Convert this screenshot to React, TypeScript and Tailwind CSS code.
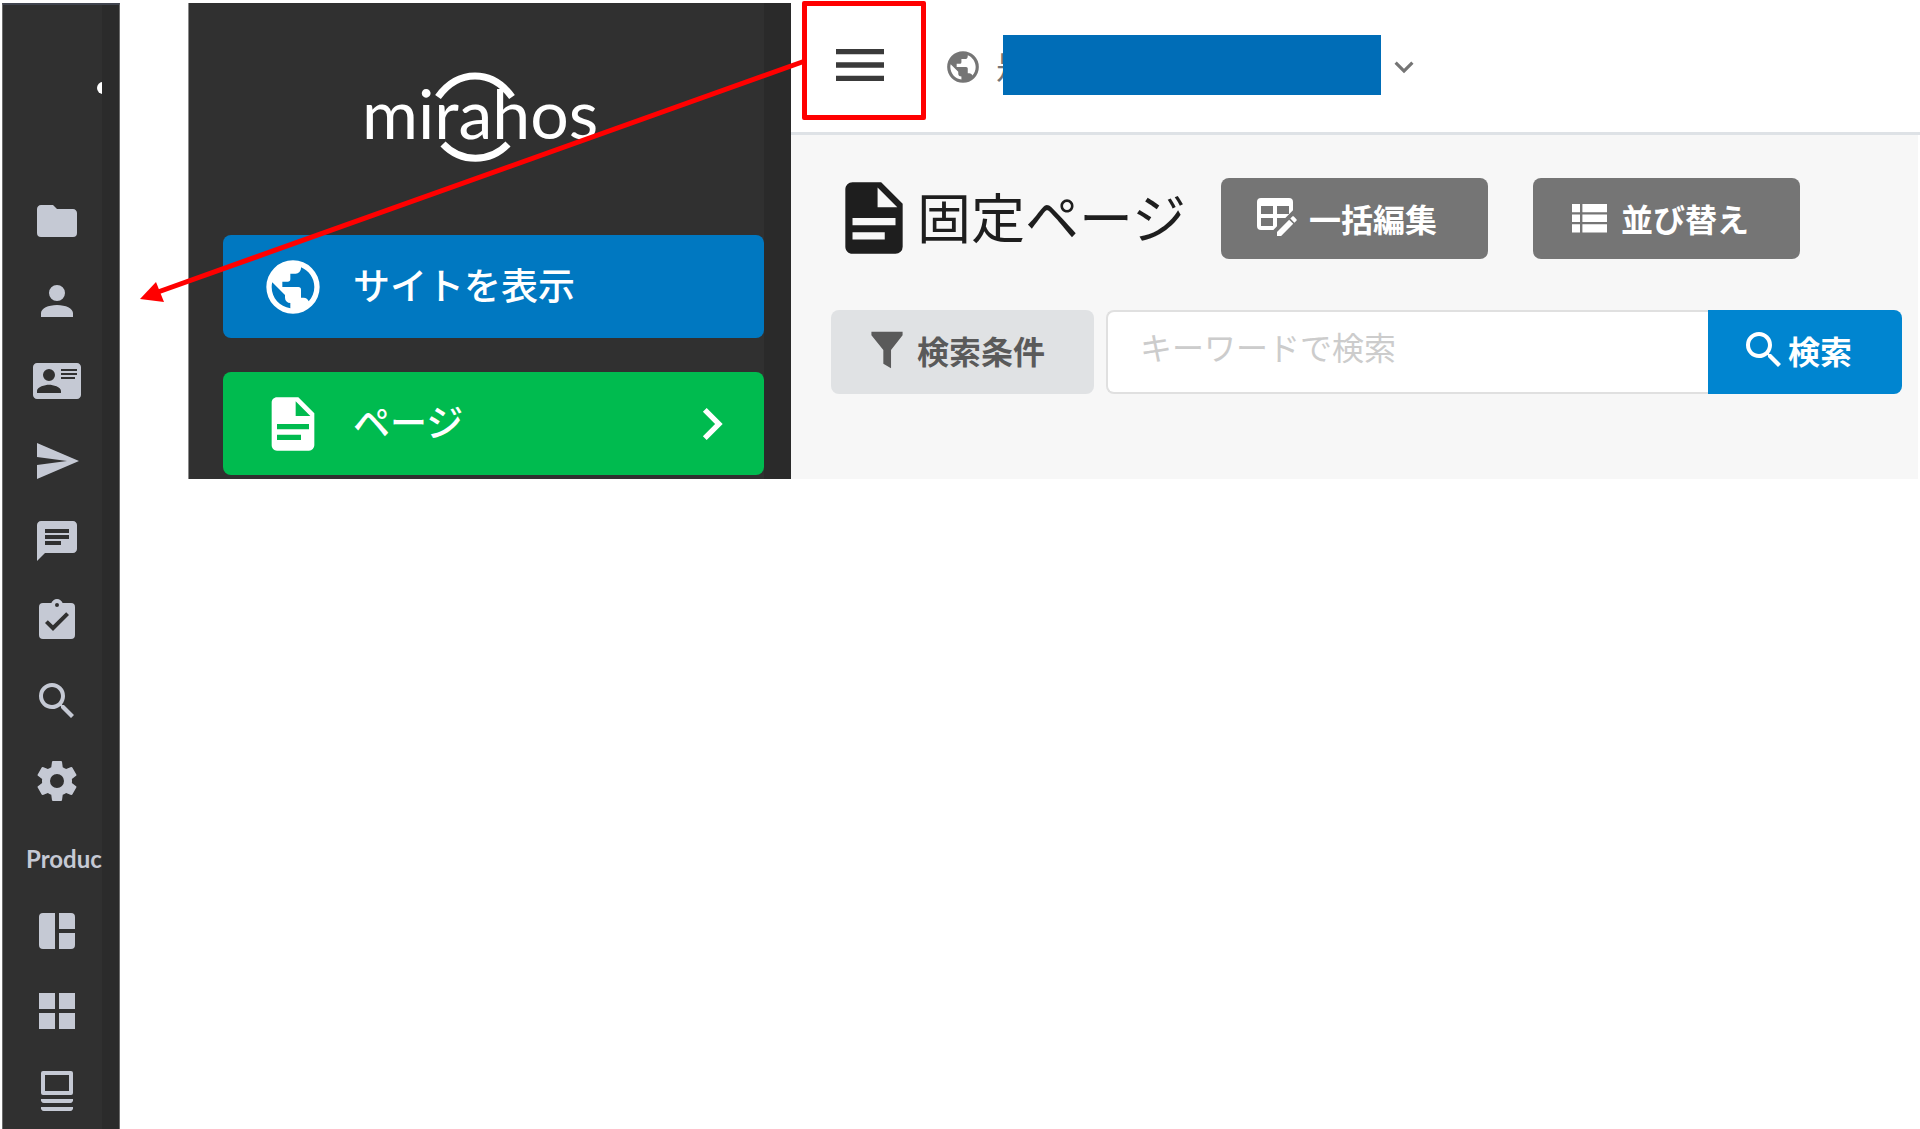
import React from 'react';

const ICONS = {
  folder: 'M10,4H4C2.89,4 2,4.89 2,6V18A2,2 0 0,0 4,20H20A2,2 0 0,0 22,18V8C22,6.89 21.1,6 20,6H12L10,4Z',
  account: 'M12,4A4,4 0 0,1 16,8A4,4 0 0,1 12,12A4,4 0 0,1 8,8A4,4 0 0,1 12,4M12,14C16.42,14 20,15.79 20,18V20H4V18C4,15.79 7.58,14 12,14Z',
  card: 'M2,3H22C23.05,3 24,3.95 24,5V19C24,20.05 23.05,21 22,21H2C0.95,21 0,20.05 0,19V5C0,3.95 0.95,3 2,3M14,6V7H22V6H14M14,8V9H22V8H14M14,10V11H21V10H14M8,13.91C6,13.91 2,15 2,17V18H14V17C14,15 10,13.91 8,13.91M8,6A3,3 0 0,0 5,9A3,3 0 0,0 8,12A3,3 0 0,0 11,9A3,3 0 0,0 8,6Z',
  send: 'M2,21L23,12L2,3V10L17,12L2,14V21Z',
  message: 'M20 2H4C2.9 2 2 2.9 2 4V22L6 18H20C21.1 18 22 17.1 22 16V4C22 2.9 21.1 2 20 2M6 9H18V11H6M14 14H6V12H14M18 8H6V6H18',
  clipboard: 'M10,17L6,13L7.41,11.59L10,14.17L16.59,7.58L18,9M12,3A1,1 0 0,1 13,4A1,1 0 0,1 12,5A1,1 0 0,1 11,4A1,1 0 0,1 12,3M19,3H14.82C14.4,1.84 13.3,1 12,1C10.7,1 9.6,1.84 9.18,3H5A2,2 0 0,0 3,5V19A2,2 0 0,0 5,21H19A2,2 0 0,0 21,19V5A2,2 0 0,0 19,3Z',
  search: 'M9.5,3A6.5,6.5 0 0,1 16,9.5C16,11.11 15.41,12.59 14.44,13.73L14.71,14H15.5L20.5,19L19,20.5L14,15.5V14.71L13.73,14.44C12.59,15.41 11.11,16 9.5,16A6.5,6.5 0 0,1 3,9.5A6.5,6.5 0 0,1 9.5,3M9.5,5C7,5 5,7 5,9.5C5,12 7,14 9.5,14C12,14 14,12 14,9.5C14,7 12,5 9.5,5Z',
  cog: 'M12,15.5A3.5,3.5 0 0,1 8.5,12A3.5,3.5 0 0,1 12,8.5A3.5,3.5 0 0,1 15.5,12A3.5,3.5 0 0,1 12,15.5M19.43,12.97C19.47,12.65 19.5,12.33 19.5,12C19.5,11.67 19.47,11.34 19.43,11L21.54,9.37C21.73,9.22 21.78,8.95 21.66,8.73L19.66,5.27C19.54,5.05 19.27,4.96 19.05,5.05L16.56,6.05C16.04,5.66 15.5,5.32 14.87,5.07L14.5,2.42C14.46,2.18 14.25,2 14,2H10C9.75,2 9.54,2.18 9.5,2.42L9.13,5.07C8.5,5.32 7.96,5.66 7.44,6.05L4.95,5.05C4.73,4.96 4.46,5.05 4.34,5.27L2.34,8.73C2.21,8.95 2.27,9.22 2.46,9.37L4.57,11C4.53,11.34 4.5,11.67 4.5,12C4.5,12.33 4.53,12.65 4.57,12.97L2.46,14.63C2.27,14.78 2.21,15.05 2.34,15.27L4.34,18.73C4.46,18.95 4.73,19.03 4.95,18.95L7.44,17.94C7.96,18.34 8.5,18.68 9.13,18.93L9.5,21.58C9.54,21.82 9.75,22 10,22H14C14.25,22 14.46,21.82 14.5,21.58L14.87,18.93C15.5,18.67 16.04,18.34 16.56,17.94L19.05,18.95C19.27,19.03 19.54,18.95 19.66,18.73L21.66,15.27C21.78,15.05 21.73,14.78 21.54,14.63L19.43,12.97Z',
  dashboard: 'M11,21H5A2,2 0 0,1 3,19V5A2,2 0 0,1 5,3H11V21M13,21H19A2,2 0 0,0 21,19V13H13V21M21,11V5A2,2 0 0,0 19,3H13V11H21Z',
  grid: 'M3,11H11V3H3M3,21H11V13H3M13,21H21V13H13M13,3V11H21V3',
  monitor: 'M5,2H19A1,1 0 0,1 20,3V13A1,1 0 0,1 19,14H5A1,1 0 0,1 4,13V3A1,1 0 0,1 5,2M6,4V12H18V4H6M4,16H20A1.6,1.6 0 0,1 18.6,18H5.4A1.6,1.6 0 0,1 4,16M4,20H20A1.6,1.6 0 0,1 18.6,22H5.4A1.6,1.6 0 0,1 4,20Z',
  earth: 'M17.9,17.39C17.64,16.59 16.89,16 16,16H15V13A1,1 0 0,0 14,12H8V10H10A1,1 0 0,0 11,9V7H13A2,2 0 0,0 15,5V4.59C17.93,5.77 20,8.64 20,12C20,14.08 19.2,15.97 17.9,17.39M11,19.93C7.05,19.44 4,16.08 4,12C4,11.38 4.08,10.78 4.21,10.21L9,15V16A2,2 0 0,0 11,18M12,2A10,10 0 0,0 2,12A10,10 0 0,0 12,22A10,10 0 0,0 22,12A10,10 0 0,0 12,2Z',
  document: 'M13,9H18.5L13,3.5V9M6,2H14L20,8V20A2,2 0 0,1 18,22H6C4.89,22 4,21.1 4,20V4C4,2.89 4.89,2 6,2M15,18V16H6V18H15M18,14V12H6V14H18Z',
  chevronRight: 'M8.59,16.58L13.17,12L8.59,7.41L10,6L16,12L10,18L8.59,16.58Z',
  chevronDown: 'M7.41,8.58L12,13.17L16.59,8.58L18,10L12,16L6,10L7.41,8.58Z',
  menu: 'M3,6H21V8H3V6M3,11H21V13H3V11M3,16H21V18H3V16Z',
  tableEdit: 'M21.7,13.35L20.7,14.35L18.65,12.3L19.65,11.3C19.86,11.09 20.21,11.09 20.42,11.3L21.7,12.58C21.91,12.79 21.91,13.14 21.7,13.35M12,18.94L18.06,12.88L20.11,14.93L14.06,21H12V18.94M4,2H18A2,2 0 0,1 20,4V8.17L16.17,12H12V16.17L10.17,18H4A2,2 0 0,1 2,16V4A2,2 0 0,1 4,2M4,6V10H10V6H4M12,6V10H18V6H12M4,12V16H10V12H4Z',
  list: 'M3.5,5H7.5V9.1H3.5V5M8.7,5H21V9.1H8.7V5M3.5,10.2H7.5V14H3.5V10.2M8.7,10.2H21V14H8.7V10.2M3.5,15.1H7.5V19.2H3.5V15.1M8.7,15.1H21V19.2H8.7V15.1Z',
  filter: 'M3.5,2H20.5V4L14.2,12V22L10,19.5V12L3.5,4Z',
};

type IconName = keyof typeof ICONS;

const Icon = ({ name, className }: { name: IconName; className: string }) => (
  <svg viewBox="0 0 24 24" fill="currentColor" fillRule="evenodd" aria-hidden="true" className={`shrink-0 ${className}`}>
    <path d={ICONS[name]} />
  </svg>
);

const mainItems: { icon: IconName; label: string }[] = [
  { icon: 'folder', label: 'フォルダ' },
  { icon: 'account', label: 'ユーザー' },
  { icon: 'card', label: '会員' },
  { icon: 'send', label: '配信' },
  { icon: 'message', label: 'コメント' },
  { icon: 'clipboard', label: 'タスク' },
  { icon: 'search', label: '検索' },
  { icon: 'cog', label: '設定' },
];

const productItems: { icon: IconName; label: string }[] = [
  { icon: 'dashboard', label: 'ダッシュボード' },
  { icon: 'grid', label: 'グリッド' },
  { icon: 'monitor', label: 'モニター' },
];

const RailLinks = ({ items }: { items: { icon: IconName; label: string }[] }) => (
  <ul className="flex flex-col items-center gap-8 pl-2">
    {items.map((item) => (
      <li key={item.label}>
        <a href="#" aria-label={item.label} className="block">
          <Icon name={item.icon} className="size-12" />
        </a>
      </li>
    ))}
  </ul>
);

const Rail = () => (
  <nav className="ml-[2px] mt-[3px] flex min-h-[1126px] w-[118px] shrink-0 border-x border-t-2 border-x-[#6b6b6b] border-t-[#41454f] bg-[#2b2b2b] text-[#c5c9d4]">
    <div className="w-[99px] bg-[#303030]">
      <div className="flex h-48 justify-end pt-[76px]">
        <svg viewBox="0 0 5 14" className="h-[14px] w-[5px]" aria-hidden="true">
          <ellipse cx="6" cy="7" rx="6" ry="6" fill="#fff" />
        </svg>
      </div>
      <RailLinks items={mainItems} />
      <p className="mt-[35px] mb-[29px] pl-[23px] font-['Lato',sans-serif] text-2xl leading-[38px] font-bold">Produc</p>
      <RailLinks items={productItems} />
    </div>
  </nav>
);

const Logo = () => (
  <div className="relative mt-[68px] ml-[139px] h-[94px] w-[232px] text-center">
    <svg viewBox="0 0 232 94" className="absolute inset-0" fill="none" stroke="#fff" strokeWidth="7" aria-hidden="true">
      <path d="M76 26C96 -2 130 -2 150 26" />
      <path d="M81 73C99 92 128 92 146 73" />
    </svg>
    <span className="block font-['Lato',sans-serif] text-[68px] leading-[84px] text-white">mirahos</span>
  </div>
);

const Sidebar = () => (
  <aside className="mt-[3px] flex w-[603px] shrink-0 border-l border-[#8a8a8a] bg-[#2a2a2a]">
    <div className="w-[575px] bg-[#303030] pb-1 pl-[34px]">
      <Logo />
      <div className="mt-[70px] flex flex-col gap-[34px] text-[37px] font-medium text-white">
        <a href="#" className="flex h-[103px] items-center rounded-lg bg-[#0078c1] pl-[38px]">
          <Icon name="earth" className="size-16" />
          <span className="ml-7 pb-1">サイトを表示</span>
        </a>
        <a href="#" className="flex h-[103px] items-center rounded-lg bg-[#00bb4f] pr-5 pl-[38px]">
          <Icon name="document" className="size-16" />
          <span className="ml-7 pb-1">ページ</span>
          <Icon name="chevronRight" className="ml-auto size-16" />
        </a>
      </div>
    </div>
  </aside>
);

const Header = () => (
  <header className="flex h-[135px] items-start border-b-[3px] border-[#dee2e6]">
    <button type="button" aria-label="メニュー" className="mt-px ml-[11px] flex h-[119px] w-[124px] items-center justify-center rounded-xs border-[5px] border-[#ff0000] pt-2 pr-2 text-[#3a3a3a]">
      <Icon name="menu" className="size-16" />
    </button>
    <button type="button" className="mt-[35px] ml-[18px] flex h-[60px] items-center text-[32px] text-[#757575]">
      <Icon name="earth" className="mt-1 size-[38px]" />
      <span className="-mr-[25px] ml-[14px] w-8">是</span>
      <span className="relative h-full w-[378px] bg-[#006db7]" />
      <Icon name="chevronDown" className="mt-1 ml-1 size-[38px]" />
    </button>
  </header>
);

const ToolButton = ({ icon, children }: { icon: IconName; children: React.ReactNode }) => (
  <button type="button" className="flex h-[81px] w-[267px] items-center gap-2 rounded-lg bg-[#757575] pl-8 text-[32px] font-bold text-white">
    <Icon name={icon} className="size-12" />
    {children}
  </button>
);

const Content = () => (
  <main className="mr-[2px] flex-1 bg-[#f7f7f7] pt-10 pr-4 pl-10">
    <div className="flex items-center">
      <Icon name="document" className="size-[86px] text-[#1e1e1e]" />
      <h1 className="pb-1 text-[54px] leading-[78px] text-[#1e1e1e]">固定ページ</h1>
      <div className="ml-[35px] flex gap-[45px]">
        <ToolButton icon="tableEdit">一括編集</ToolButton>
        <ToolButton icon="list">並び替え</ToolButton>
      </div>
    </div>
    <form className="mt-[49px] flex h-[84px] text-[32px]" onSubmit={(e) => e.preventDefault()}>
      <button type="button" className="flex w-[263px] shrink-0 items-center gap-2 rounded-lg bg-[#e0e2e4] pb-1 pl-[34px] font-bold text-[#5a5a5a]">
        <Icon name="filter" className="size-11" />
        検索条件
      </button>
      <input
        type="search"
        aria-label="キーワードで検索"
        placeholder="キーワードで検索"
        className="ml-3 min-w-0 flex-1 rounded-l-lg border-2 border-r-0 border-[#e0e0e0] bg-white pb-3 pl-8 outline-none placeholder:text-[#cccccc]"
      />
      <button type="submit" className="flex w-[194px] shrink-0 items-center rounded-r-lg bg-[#0085d0] pb-1 pl-8 font-bold text-white">
        <Icon name="search" className="size-12" />
        検索
      </button>
    </form>
  </main>
);

export default function App() {
  return (
    <div className="relative flex items-start gap-[68px] overflow-hidden bg-white font-['Noto_Sans_CJK_JP',sans-serif]">
      <Rail />
      <div className="flex min-h-[479px] min-w-0 flex-1">
        <Sidebar />
        <div className="flex min-w-0 flex-1 flex-col">
          <Header />
          <Content />
        </div>
      </div>
      {/* Arrow from the menu button to the collapsed rail */}
      <svg className="pointer-events-none absolute top-0 left-0" width="820" height="310" aria-hidden="true">
        <path d="M805 61L158 292" stroke="#ff0000" strokeWidth="5" />
        <path d="M140 299L156 282L164 302Z" fill="#ff0000" />
      </svg>
    </div>
  );
}
